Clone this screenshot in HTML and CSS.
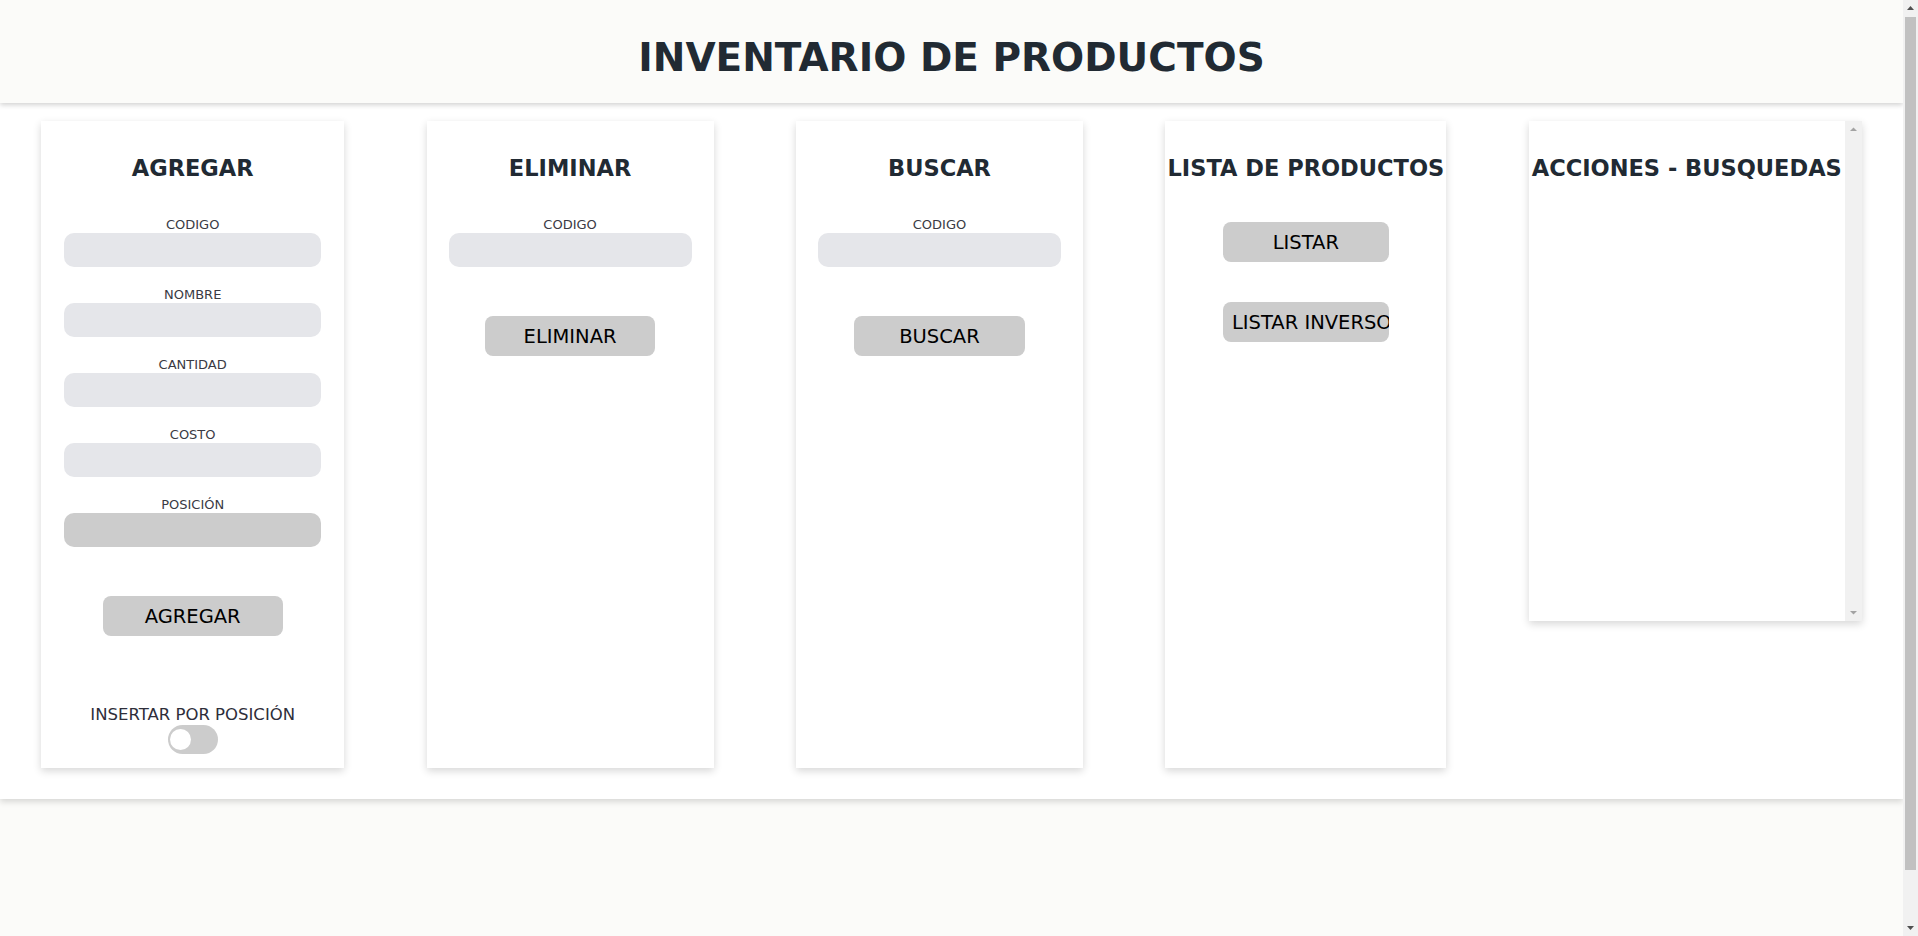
FILE: index.html
```html
<!DOCTYPE html>
<html lang="es">
<head>
<meta charset="utf-8">
<title>Inventario de productos</title>
<link rel="stylesheet" href="styles.css">
</head>
<body>
<div class="page">
  <header class="top">
    <h1 class="title">INVENTARIO DE PRODUCTOS</h1>
  </header>
  <main class="panels">
    <section class="card card-add">
      <h2 class="card-title">AGREGAR</h2>
      <div class="fields">
        <label class="field"><span class="field-label">CODIGO</span><input class="field-input" type="text"></label>
        <label class="field"><span class="field-label">NOMBRE</span><input class="field-input" type="text"></label>
        <label class="field"><span class="field-label">CANTIDAD</span><input class="field-input" type="text"></label>
        <label class="field"><span class="field-label">COSTO</span><input class="field-input" type="text"></label>
        <label class="field"><span class="field-label">POSICIÓN</span><input class="field-input" type="text" disabled></label>
      </div>
      <button class="btn btn-gap">AGREGAR</button>
      <div class="switch-block">
        <span class="switch-label">INSERTAR POR POSICIÓN</span>
        <span class="switch"><span class="knob"></span></span>
      </div>
    </section>
    <section class="card card-del">
      <h2 class="card-title">ELIMINAR</h2>
      <div class="fields">
        <label class="field"><span class="field-label">CODIGO</span><input class="field-input" type="text"></label>
      </div>
      <button class="btn btn-gap">ELIMINAR</button>
    </section>
    <section class="card card-find">
      <h2 class="card-title">BUSCAR</h2>
      <div class="fields">
        <label class="field"><span class="field-label">CODIGO</span><input class="field-input" type="text"></label>
      </div>
      <button class="btn btn-gap">BUSCAR</button>
    </section>
    <section class="card card-list">
      <h2 class="card-title">LISTA DE PRODUCTOS</h2>
      <button class="btn btn-list">LISTAR</button>
      <button class="btn btn-list">LISTAR INVERSO</button>
    </section>
    <section class="card-log">
      <div class="log-body">
        <h2 class="card-title">ACCIONES - BUSQUEDAS</h2>
      </div>
      <div class="log-track">
        <svg class="arrow" width="17" height="17" viewBox="0 0 17 17"><path d="M5 10 L8.5 6.5 L12 10 Z" fill="#a3a3a3"/></svg>
        <svg class="arrow" width="17" height="17" viewBox="0 0 17 17"><path d="M5 7 L8.5 10.5 L12 7 Z" fill="#a3a3a3"/></svg>
      </div>
    </section>
  </main>
</div>
<div class="vscroll">
  <svg class="arrow-main" width="15" height="17" viewBox="0 0 15 17"><path d="M4 10 L7.5 6 L11 10 Z" fill="#505050"/></svg>
  <div class="thumb"></div>
  <div class="rest"></div>
  <svg class="arrow-main" width="15" height="17" viewBox="0 0 15 17"><path d="M4 7 L7.5 11 L11 7 Z" fill="#505050"/></svg>
</div>
</body>
</html>
```
FILE: styles.css
```css
html, body {
  margin: 0;
  padding: 0;
}
body {
  background: #fbfbf9;
  font-family: "DejaVu Sans", "Liberation Sans", sans-serif;
  color: #212a33;
}
.page {
  min-height: 990px;
  margin-right: 15px;
}
.top {
  position: relative;
  z-index: 2;
  background: #fbfbf9;
  padding: 35px 0 23px;
  box-shadow: 0 2px 5px rgba(0, 0, 0, 0.18);
}
.title {
  margin: 0;
  text-align: center;
  font-size: 39px;
  line-height: 45px;
  font-weight: bold;
  color: #212a33;
}
.panels {
  position: relative;
  z-index: 1;
  background: #ffffff;
  display: flex;
  justify-content: space-around;
  align-items: stretch;
  padding: 18px 0 31px;
  box-shadow: 0 3px 6px rgba(0, 0, 0, 0.14);
}
.card {
  box-sizing: border-box;
  background: #fff;
  box-shadow: 0 3px 8px rgba(0, 0, 0, 0.16);
  padding: 33px 22px 14px;
  display: flex;
  flex-direction: column;
  align-items: center;
}
.card-add { width: 303px; padding-left: 23px; padding-right: 23px; }
.card-del { width: 287px; }
.card-find { width: 287px; }
.card-list { width: 281px; }
.card-log {
  box-sizing: border-box;
  width: 333px;
  height: 500px;
  align-self: flex-start;
  background: #fff;
  box-shadow: 0 3px 8px rgba(0, 0, 0, 0.16);
  display: flex;
}
.log-body {
  flex: 1;
  min-width: 0;
  padding-top: 33px;
}
.log-track {
  width: 17px;
  background: #f1f1f1;
  display: flex;
  flex-direction: column;
  justify-content: space-between;
}
.arrow {
  display: block;
}
.card-title {
  margin: 0;
  font-size: 22.5px;
  line-height: 28px;
  font-weight: bold;
  text-align: center;
  white-space: nowrap;
  color: #212a33;
}
.fields {
  align-self: stretch;
  display: flex;
  flex-direction: column;
  gap: 19px;
  margin-top: 34px;
}
.field {
  display: flex;
  flex-direction: column;
  align-items: center;
}
.field-label {
  font-size: 13px;
  line-height: 17px;
  color: #3a3a44;
}
.field-input {
  box-sizing: border-box;
  width: 100%;
  height: 34px;
  border: none;
  border-radius: 10px;
  background: #e5e6ea;
  outline: none;
  padding: 0 10px;
}
.field-input:disabled {
  background: #cccccc;
}
.btn {
  box-sizing: border-box;
  width: 70%;
  height: 40px;
  border: none;
  border-radius: 8px;
  background: #cccccc;
  color: #000;
  font-family: "DejaVu Sans", "Liberation Sans", sans-serif;
  font-size: 19.5px;
  padding: 0 9px;
  text-align: center;
  white-space: nowrap;
  overflow: hidden;
}
.btn-gap {
  margin-top: 49px;
}
.btn-list {
  margin-top: 40px;
}
.switch-block {
  margin-top: 69px;
  display: flex;
  flex-direction: column;
  align-items: center;
}
.switch-label {
  font-size: 16.5px;
  line-height: 20px;
  color: #2e2e3a;
  white-space: nowrap;
}
.switch {
  position: relative;
  width: 50px;
  height: 29px;
  border-radius: 15px;
  background: #cccccc;
}
.knob {
  position: absolute;
  left: 2px;
  top: 4px;
  width: 21px;
  height: 21px;
  border-radius: 50%;
  background: #fff;
}
.vscroll {
  position: fixed;
  top: 0;
  right: 0;
  width: 15px;
  height: 100vh;
  background: #f1f1f1;
  display: flex;
  flex-direction: column;
  z-index: 10;
}
.arrow-main {
  display: block;
  flex: none;
}
.thumb {
  height: 853px;
  margin: 0 2px;
  background: #c1c1c1;
}
.rest {
  flex: 1;
}
```
